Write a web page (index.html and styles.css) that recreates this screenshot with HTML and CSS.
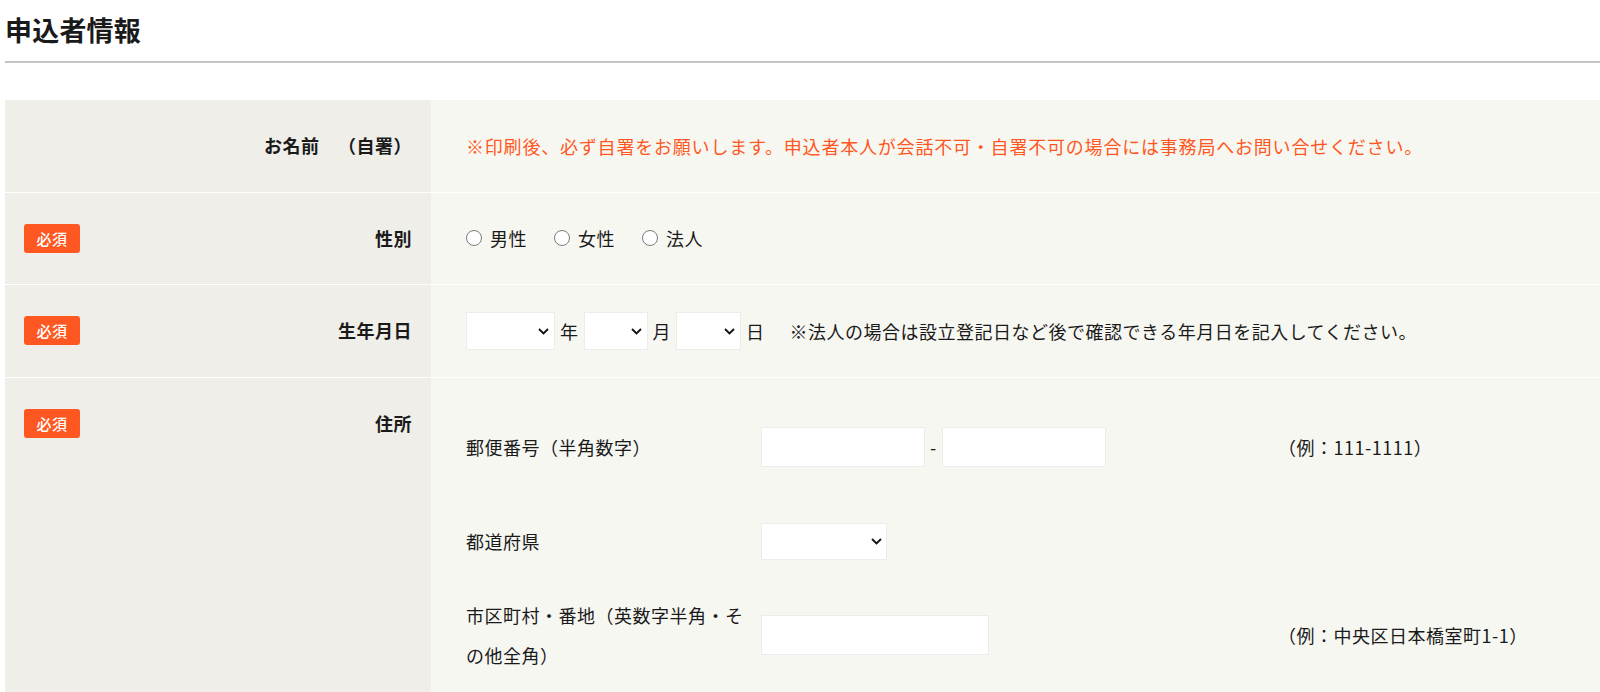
FILE: index.html
```html
<!DOCTYPE html>
<html lang="ja">
<head>
<meta charset="utf-8">
<title>申込者情報</title>
<link rel="stylesheet" href="styles.css">
</head>
<body>
<div class="page">
  <h2 class="section-title">申込者情報</h2>
  <div class="form-table">
    <div class="row">
      <div class="th"><span class="label">お名前　（自署）</span></div>
      <div class="td"><p class="note-red">※印刷後、必ず自署をお願いします。申込者本人が会話不可・自署不可の場合には事務局へお問い合せください。</p></div>
    </div>
    <div class="row">
      <div class="th"><span class="badge">必須</span><span class="label">性別</span></div>
      <div class="td">
        <div class="radios">
          <label class="radio"><input type="radio" name="sex"><span>男性</span></label>
          <label class="radio"><input type="radio" name="sex"><span>女性</span></label>
          <label class="radio"><input type="radio" name="sex"><span>法人</span></label>
        </div>
      </div>
    </div>
    <div class="row">
      <div class="th"><span class="badge">必須</span><span class="label">生年月日</span></div>
      <div class="td">
        <div class="date">
          <span class="select"><select class="sel-year"><option></option></select><svg width="11" height="7" viewBox="0 0 11 7"><path d="M1 1 L5.5 5.5 L10 1" fill="none" stroke="#111" stroke-width="1.8"/></svg></span>
          <span>年</span>
          <span class="select"><select class="sel-month"><option></option></select><svg width="11" height="7" viewBox="0 0 11 7"><path d="M1 1 L5.5 5.5 L10 1" fill="none" stroke="#111" stroke-width="1.8"/></svg></span>
          <span>月</span>
          <span class="select"><select class="sel-day"><option></option></select><svg width="11" height="7" viewBox="0 0 11 7"><path d="M1 1 L5.5 5.5 L10 1" fill="none" stroke="#111" stroke-width="1.8"/></svg></span>
          <span>日</span>
          <span class="date-note">※法人の場合は設立登記日など後で確認できる年月日を記入してください。</span>
        </div>
      </div>
    </div>
    <div class="row">
      <div class="th"><span class="badge">必須</span><span class="label">住所</span></div>
      <div class="td td-top">
        <div class="addr-row addr-zip">
          <div class="addr-label">郵便番号（半角数字）</div>
          <div class="addr-field zip">
            <input type="text" class="in-zip">
            <span>-</span>
            <input type="text" class="in-zip">
          </div>
          <div class="addr-example">（例：111-1111）</div>
        </div>
        <div class="addr-row">
          <div class="addr-label">都道府県</div>
          <div class="addr-field">
            <span class="select"><select class="sel-pref"><option></option></select><svg width="11" height="7" viewBox="0 0 11 7"><path d="M1 1 L5.5 5.5 L10 1" fill="none" stroke="#111" stroke-width="1.8"/></svg></span>
          </div>
          <div class="addr-example"></div>
        </div>
        <div class="addr-row addr-city">
          <div class="addr-label">市区町村・番地（英数字半角・その他全角）</div>
          <div class="addr-field">
            <input type="text" class="in-city">
          </div>
          <div class="addr-example">（例：中央区日本橋室町1-1）</div>
        </div>
      </div>
    </div>
  </div>
</div>
</body>
</html>
```

FILE: styles.css
```css
* { box-sizing: border-box; }
html, body { margin: 0; padding: 0; }
body {
  font-family: "Noto Sans CJK JP", "Noto Sans", sans-serif;
  color: #1a1a1a;
  background: #fff;
  font-size: 18px;
  letter-spacing: 0.5px;
  text-spacing-trim: space-all;
}
.page { padding-left: 5px; }
.section-title {
  margin: 0;
  font-size: 27px;
  font-weight: 700;
  line-height: 39px;
  padding: 10px 0 12px;
  border-bottom: 2px solid #c4c4c4;
  letter-spacing: 0.2px;
}
.form-table { margin-top: 37px; }
.row {
  display: grid;
  grid-template-columns: 426px 1fr;
  border-bottom: 1px solid #fff;
}
.row:last-child { border-bottom: 0; }
.th {
  background: #efeee9;
  display: flex;
  align-items: flex-start;
  justify-content: space-between;
  padding: 31.25px 19px 31.25px 19px;
  line-height: 29px;
}
.label { margin-left: auto; font-weight: 700; }
.badge {
  display: inline-block;
  width: 56px;
  height: 29px;
  line-height: 29px;
  text-align: center;
  background: #ff5722;
  color: #fff;
  border-radius: 3px;
  font-size: 15px;
  font-weight: 500;
  letter-spacing: 0.5px;
}
.td {
  background: #f7f7f2;
  display: flex;
  align-items: center;
  padding: 0 35px;
}
.td-top {
  display: block;
  padding: 49.5px 35px 17px;
}
.note-red { margin: 0; color: #ff5722; letter-spacing: 0.8px; }

.radios { display: flex; align-items: center; gap: 27px; }
.radio { display: flex; align-items: center; gap: 8px; }
.radio input {
  appearance: none;
  -webkit-appearance: none;
  width: 16px;
  height: 16px;
  margin: 0;
  border: 1px solid #7a7a7a;
  border-radius: 50%;
  background: #fff;
}

.date { display: flex; align-items: center; gap: 5px; }
.date-note { margin-left: 20px; }

.select { position: relative; display: inline-block; line-height: 0; }
.select select {
  appearance: none;
  -webkit-appearance: none;
  background: #fff;
  border: 1px solid #ececec;
  border-radius: 0;
  margin: 0;
  padding: 0;
  font-family: inherit;
}
.select svg { position: absolute; right: 6px; top: 50%; margin-top: -3px; pointer-events: none; }
.sel-year { width: 89px; height: 38px; }
.sel-month { width: 64px; height: 38px; }
.sel-day { width: 65px; height: 38px; }
.sel-pref { width: 126px; height: 37px; }
.sel-pref + svg { right: 5px; }

.addr-row {
  display: grid;
  grid-template-columns: 295px 517px 1fr;
  align-items: center;
  margin-bottom: 34px;
}
.addr-zip { margin-bottom: 54px; }
.addr-city { margin-bottom: 0; }
.addr-label { line-height: 40px; max-width: 285px; }
.addr-field { display: flex; align-items: center; }
.zip { gap: 5px; }
.addr-field input {
  height: 40px;
  border: 1px solid #ececec;
  background: #fff;
  margin: 0;
  padding: 0 8px;
  border-radius: 0;
  font-family: inherit;
}
.in-zip { width: 164px; }
.in-city { width: 228px; }
.addr-example { line-height: 40px; }
```
